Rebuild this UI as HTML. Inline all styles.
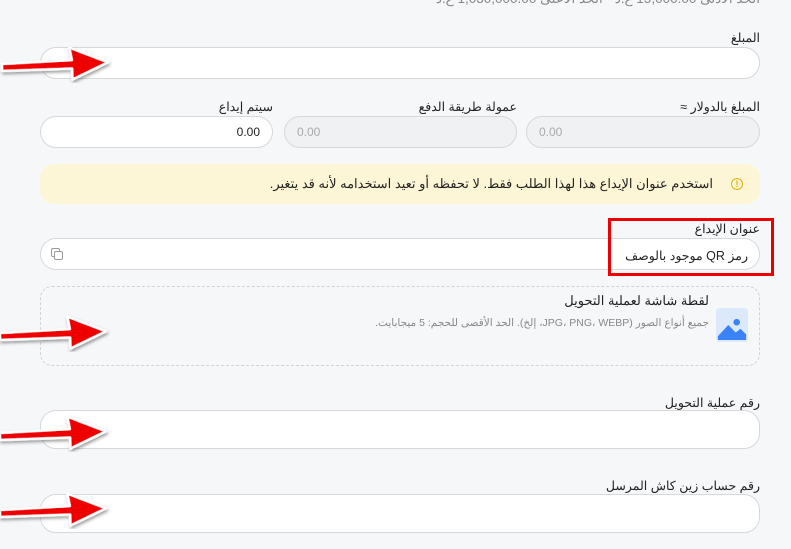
<!DOCTYPE html>
<html><head><meta charset="utf-8"><style>
body{margin:0;width:791px;height:549px;background:#f6f7f9;position:relative;overflow:hidden;font-family:"Liberation Sans","Noto Sans CJK SC",sans-serif;direction:rtl}
.a{position:absolute}
.lbl{position:absolute;font-size:12.5px;color:#222;right:31px;white-space:nowrap}
.in{position:absolute;background:#fff;border:1px solid #d6d8dc;border-radius:16px;box-sizing:border-box}
.dis{background:#f0f1f3}
.num{position:absolute;font-size:12px;left:12px;top:8px;direction:ltr}
</style></head><body>
<div class="a" style="right:31px;top:-9px;font-size:13.5px;color:#888;white-space:nowrap">الحد الأدنى 15,000.00 ع.د - الحد الأعلى 1,030,000.00 ع.د</div>

<div class="lbl" style="top:30px">المبلغ</div>
<div class="in" style="left:40px;top:47px;width:720px;height:32px"></div>

<div class="a" style="right:31px;top:99px;font-size:12.5px;color:#222">المبلغ بالدولار ≈</div>
<div class="a" style="right:274px;top:99px;font-size:12.5px;color:#222">عمولة طريقة الدفع</div>
<div class="a" style="right:518px;top:99px;font-size:12.5px;color:#222">سيتم إيداع</div>
<div class="in dis" style="left:526px;top:116px;width:234px;height:32px"><span class="num" style="color:#aaa">0.00</span></div>
<div class="in dis" style="left:284px;top:116px;width:233px;height:32px"><span class="num" style="color:#aaa">0.00</span></div>
<div class="in" style="left:40px;top:116px;width:233px;height:32px"><span class="num" style="color:#222;left:auto;right:12px">0.00</span></div>

<div class="a" style="left:40px;top:164px;width:720px;height:40px;background:#fdf6d6;border-radius:14px"></div>
<div class="a" style="left:731px;top:178px;width:10px;height:10px;border:1.5px solid #e8b000;border-radius:50%;font-size:9px;color:#e8b000;text-align:center;line-height:10px;font-weight:bold">!</div>
<div class="a" style="right:78px;top:176px;font-size:13px;color:#222;white-space:nowrap">استخدم عنوان الإيداع هذا لهذا الطلب فقط. لا تحفظه أو تعيد استخدامه لأنه قد يتغير.</div>

<div class="lbl" style="top:221px">عنوان الإيداع</div>
<div class="in" style="left:40px;top:238px;width:720px;height:32px"></div>
<div class="a" style="left:51px;top:248px;width:7px;height:7px;border:1px solid #999;border-radius:2px"></div>
<div class="a" style="left:54px;top:251px;width:7px;height:7px;border:1px solid #999;border-radius:2px;background:#fff"></div>
<div class="a" style="right:43px;top:248px;font-size:12.5px;color:#222;white-space:nowrap">رمز QR موجود بالوصف</div>
<div class="a" style="left:608px;top:218px;width:166px;height:58px;border:3px solid #e00;box-sizing:border-box"></div>

<div class="a" style="left:40px;top:286px;width:720px;height:80px;border:1px dashed #cfd2d6;border-radius:12px;box-sizing:border-box"></div>
<svg class="a" style="left:716px;top:308px" width="32" height="34" viewBox="0 0 34 36"><rect width="34" height="36" rx="4" fill="#dce9fb"/><circle cx="22" cy="15" r="3.5" fill="#3b82f6"/><path d="M2 30 L13 18 L21 26 L26 22 L32 28 L32 34 L2 34Z" fill="#3b82f6"/></svg>
<div class="a" style="right:82px;top:293px;font-size:13px;color:#222;white-space:nowrap">لقطة شاشة لعملية التحويل</div>
<div class="a" style="right:82px;top:317px;font-size:10.5px;color:#888;white-space:nowrap">جميع أنواع الصور (JPG، PNG، WEBP، إلخ). الحد الأقصى للحجم: 5 ميجابايت.</div>

<div class="lbl" style="top:395px">رقم عملية التحويل</div>
<div class="in" style="left:40px;top:410px;width:720px;height:39px"></div>
<div class="lbl" style="top:478px">رقم حساب زين كاش المرسل</div>
<div class="in" style="left:40px;top:494px;width:720px;height:39px"></div>

<svg class="a" style="left:0;top:0" width="140" height="549" viewBox="0 0 140 549">
<defs><filter id="s"><feDropShadow dx="1" dy="2" stdDeviation="1.5" flood-opacity="0.4"/></filter>
<g id="ar"><path d="M0 -3 L70 -4.5 L68 -17 L106 -1 L70 15 L70 4 L0 4Z" fill="#ee0000" stroke="#fff" stroke-width="2.5" stroke-linejoin="round" filter="url(#s)"/></g></defs>
<use href="#ar" transform="translate(2,67) rotate(-2)"/>
<use href="#ar" transform="translate(0,336) rotate(-2)"/>
<use href="#ar" transform="translate(0,436) rotate(-2)"/>
<use href="#ar" transform="translate(0,513) rotate(-2)"/>
</svg>
</body></html>
